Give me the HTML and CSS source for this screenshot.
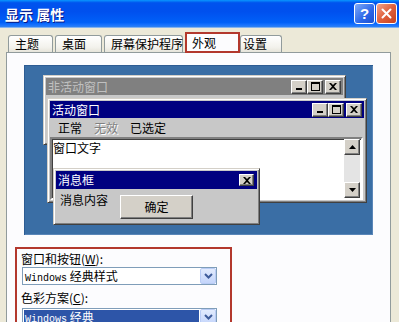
FILE: index.html
```html
<!DOCTYPE html>
<html>
<head>
<meta charset="utf-8">
<title>显示 属性</title>
<link rel="stylesheet" href="styles.css">
</head>
<body>
<div class="titlebar">
  <span class="title">显示 属性</span>
  <div class="caption-btns">
    <span class="cbtn help">?</span>
    <span class="cbtn close"><svg width="11" height="11" viewBox="0 0 11 11"><path d="M1.5 1.5L9.5 9.5M9.5 1.5L1.5 9.5" stroke="#fff" stroke-width="2" stroke-linecap="round"/></svg></span>
  </div>
</div>

<div class="tabs">
  <div class="tab t1">主题</div>
  <div class="tab t2">桌面</div>
  <div class="tab t3">屏幕保护程序</div>
  <div class="tab selected">外观</div>
  <div class="tab t5">设置</div>
</div>

<div class="panel">
  <div class="preview">
    <div class="win inactive">
      <div class="caption">
        <span class="cap-text">非活动窗口</span>
        <div class="cap-btns">
          <span class="cap-btn"><svg width="8" height="7" viewBox="0 0 8 7"><rect x="1" y="5" width="6" height="2" fill="#000"/></svg></span>
          <span class="cap-btn"><svg width="9" height="9" viewBox="0 0 9 9"><path d="M0 0H9V9H0Z M1 2H8V8H1Z" fill="#000" fill-rule="evenodd"/></svg></span>
          <span class="cap-btn gap"><svg width="8" height="7" viewBox="0 0 8 7"><path d="M0 0H2L4 2L6 0H8L5 3.5L8 7H6L4 5L2 7H0L3 3.5Z" fill="#000"/></svg></span>
        </div>
      </div>
    </div>

    <div class="win active">
      <div class="caption">
        <span class="cap-text">活动窗口</span>
        <div class="cap-btns">
          <span class="cap-btn"><svg width="8" height="7" viewBox="0 0 8 7"><rect x="1" y="5" width="6" height="2" fill="#000"/></svg></span>
          <span class="cap-btn"><svg width="9" height="9" viewBox="0 0 9 9"><path d="M0 0H9V9H0Z M1 2H8V8H1Z" fill="#000" fill-rule="evenodd"/></svg></span>
          <span class="cap-btn gap"><svg width="8" height="7" viewBox="0 0 8 7"><path d="M0 0H2L4 2L6 0H8L5 3.5L8 7H6L4 5L2 7H0L3 3.5Z" fill="#000"/></svg></span>
        </div>
      </div>
      <div class="menubar">
        <span class="menu-item">正常</span>
        <span class="menu-item disabled">无效</span>
        <span class="menu-item">已选定</span>
      </div>
      <div class="textarea">
        <span class="wintext">窗口文字</span>
        <div class="scrollbar">
          <span class="sb-btn"><svg width="7" height="4" viewBox="0 0 7 4"><path d="M3.5 0L7 4H0Z" fill="#000"/></svg></span>
          <span class="sb-track"></span>
          <span class="sb-btn"><svg width="7" height="4" viewBox="0 0 7 4"><path d="M0 0H7L3.5 4Z" fill="#000"/></svg></span>
        </div>
      </div>
    </div>

    <div class="win msgbox">
      <div class="caption small">
        <span class="cap-text">消息框</span>
        <span class="cap-btn mclose"><svg width="8" height="7" viewBox="0 0 8 7"><path d="M0 0H2L4 2L6 0H8L5 3.5L8 7H6L4 5L2 7H0L3 3.5Z" fill="#000"/></svg></span>
      </div>
      <div class="msg-body">
        <span class="msg-text">消息内容</span>
        <span class="ok-btn">确定</span>
      </div>
    </div>
  </div>

  <div class="group">
    <div class="label">窗口和按钮(<u>W</u>):</div>
    <div class="combo">
      <span class="combo-text"><span class="lat">Windows</span> 经典样式</span>
      <span class="combo-btn"><svg width="9" height="6" viewBox="0 0 9 6"><path d="M1 1L4.5 4.5L8 1" stroke="#3E5C9A" stroke-width="2" fill="none"/></svg></span>
    </div>
    <div class="label second">色彩方案(<u>C</u>):</div>
    <div class="combo">
      <span class="combo-text highlight"><span class="lat">Windows</span> 经典</span>
      <span class="combo-btn"><svg width="9" height="6" viewBox="0 0 9 6"><path d="M1 1L4.5 4.5L8 1" stroke="#3E5C9A" stroke-width="2" fill="none"/></svg></span>
    </div>
  </div>
</div>
</body>
</html>
```

FILE: styles.css
```css
html, body {
  margin: 0;
  padding: 0;
}
body {
  width: 399px;
  height: 322px;
  overflow: hidden;
  background: #ECE9D8;
  font-family: "Noto Sans CJK SC", "Liberation Sans", sans-serif;
  font-size: 12px;
  color: #000;
}

/* Title bar */
.titlebar {
  height: 28px;
  display: flex;
  align-items: center;
  padding: 0 2px 0 5px;
  background: linear-gradient(to bottom, #0997FF 0%, #0053EE 10%, #0050EE 40%, #0060F8 80%, #1A74FF 90%, #2E82F0 96%, #C9D9F0 100%);
}
.title {
  flex: 1;
  color: #fff;
  font-weight: bold;
  font-size: 14px;
  line-height: 16px;
  text-shadow: 1px 1px #0A1883;
}
.caption-btns {
  display: flex;
  gap: 1px;
  align-self: flex-start;
  margin-top: 3px;
}
.cbtn {
  width: 21px;
  height: 21px;
  box-sizing: border-box;
  border: 1px solid #fff;
  border-radius: 3px;
  display: flex;
  align-items: center;
  justify-content: center;
}
.help {
  background: linear-gradient(to bottom right, #7FAAF8, #2A66E8 60%, #1C50D0);
  color: #fff;
  font-family: "Liberation Sans", sans-serif;
  font-weight: bold;
  font-size: 15px;
  line-height: 19px;
}
.close {
  background: linear-gradient(to bottom right, #F3A58C, #E0603C 50%, #C8421E);
}

/* Tabs */
.tabs {
  display: flex;
  align-items: flex-end;
  gap: 2px;
  height: 21px;
  margin-top: 4px;
  margin-bottom: -1px;
  padding-left: 8px;
  position: relative;
  z-index: 1;
}
.tab {
  box-sizing: border-box;
  height: 17px;
  margin-bottom: 1px;
  border: 1px solid #919B9C;
  border-bottom: none;
  border-radius: 3px 3px 0 0;
  background: linear-gradient(to bottom, #FFFFFF, #F3F2EC 70%, #E6E4DA);
  padding-left: 6px;
  line-height: 15px;
  white-space: nowrap;
}
.t1 { width: 45px; }
.t2 { width: 47px; }
.t3 { width: 79px; }
.t5 { width: 42px; padding-left: 2px; }
.tab.selected {
  width: 55px;
  height: 21px;
  margin-bottom: 0;
  margin-right: -2px;
  border: 2px solid #B3382D;
  border-radius: 0;
  background: #FCFCFE;
  padding-left: 5px;
  line-height: 18px;
}

/* Panel */
.panel {
  margin: 0 8px 0 6px;
  height: 270px;
  overflow: hidden;
  border: 1px solid #919B9C;
  border-bottom: none;
  background: #FCFCFE;
  padding-top: 12px;
  box-sizing: border-box;
}

.preview {
  position: relative;
  margin-left: 17px;
  width: 349px;
  height: 170px;
  background: #3A6EA5;
  box-shadow: inset 1px 1px #2D5C93, inset -1px -1px #5A86B8;
}

/* Classic windows */
.win {
  position: absolute;
  box-sizing: border-box;
  background: #C8C8C8;
  border: 1px solid;
  border-color: #D4D0C8 #404040 #404040 #D4D0C8;
  box-shadow: inset 1px 1px #FFFFFF, inset -1px -1px #808080;
  padding: 2px;
  display: flex;
  flex-direction: column;
}
.inactive { left: 19px; top: 10px; width: 303px; height: 70px; }
.active { left: 23px; top: 33px; width: 320px; height: 105px; }
.msgbox { left: 29px; top: 103px; width: 207px; height: 57px; }

.caption {
  height: 17px;
  display: flex;
  align-items: center;
  padding-left: 2px;
  background: #000080;
  color: #fff;
}
.inactive .caption {
  background: #808080;
  color: #C0C0C0;
}
.caption.small { height: 18px; }
.cap-text {
  flex: 1;
  line-height: 14px;
}
.cap-btns {
  display: flex;
  margin-right: 2px;
}
.cap-btn {
  width: 16px;
  height: 14px;
  box-sizing: border-box;
  background: #D4D0C8;
  border: 1px solid;
  border-color: #FFFFFF #404040 #404040 #FFFFFF;
  box-shadow: inset -1px -1px #808080;
  display: flex;
  align-items: center;
  justify-content: center;
}
.cap-btn.gap { margin-left: 2px; }
.cap-btn.mclose {
  width: 15px;
  height: 12px;
  margin-right: 3px;
}

.menubar {
  height: 19px;
  display: flex;
  align-items: center;
  padding-left: 2px;
}
.menu-item {
  padding: 0 6px;
  line-height: 14px;
}
.menu-item.disabled {
  color: #808080;
  text-shadow: 1px 1px #FFFFFF;
}

.textarea {
  height: 63px;
  box-sizing: border-box;
  margin-right: 1px;
  background: #FFFFFF;
  border: 2px solid;
  border-color: #808080 #FFFFFF #FFFFFF #808080;
  box-shadow: inset 1px 1px #404040;
  display: flex;
}
.wintext {
  flex: 1;
  padding: 2px 0 0 1px;
  line-height: 14px;
}
.scrollbar {
  width: 16px;
  display: flex;
  flex-direction: column;
  background: #E4E4E4;
  margin-right: 1px;
}
.sb-btn {
  height: 16px;
  box-sizing: border-box;
  background: #D4D0C8;
  border: 1px solid;
  border-color: #FFFFFF #404040 #404040 #FFFFFF;
  box-shadow: inset -1px -1px #808080;
  display: flex;
  align-items: center;
  justify-content: center;
}
.sb-track { flex: 1; }

.msg-body {
  flex: 1;
  display: flex;
  align-items: flex-start;
  padding: 4px 0 0 4px;
}
.msg-text { line-height: 14px; }
.ok-btn {
  width: 73px;
  height: 24px;
  margin: 2px 0 0 12px;
  box-sizing: border-box;
  background: #D4D0C8;
  border: 1px solid;
  border-color: #FFFFFF #404040 #404040 #FFFFFF;
  box-shadow: inset -1px -1px #808080;
  display: flex;
  align-items: center;
  justify-content: center;
  line-height: 14px;
}

/* Group */
.group {
  margin: 12px 0 0 8px;
  width: 217px;
  height: 100px;
  box-sizing: border-box;
  border: 2px solid #B3382D;
  padding: 3px 4px 0 4px;
}
.label {
  line-height: 14px;
  color: #000;
}
.label.second { margin-top: 6px; }
.combo {
  margin: 1px 0 0 1px;
  width: 195px;
  height: 18px;
  box-sizing: border-box;
  border: 1px solid #7F9DB9;
  background: #FFFFFF;
  display: flex;
}
.label.second + .combo { margin-top: 3px; }
.combo-text {
  flex: 1;
  padding-left: 2px;
  line-height: 16px;
  white-space: nowrap;
}
.combo-text.highlight {
  margin: 1px;
  padding-left: 1px;
  line-height: 14px;
  background: #2D55A8;
  color: #FFFFFF;
}
.lat {
  font-family: "Liberation Mono", monospace;
  font-size: 10px;
}
.combo-btn {
  width: 16px;
  box-sizing: border-box;
  border: 1px solid #B9CCF5;
  border-radius: 2px;
  background: linear-gradient(to bottom, #E2EBFD, #C4D5FB);
  display: flex;
  align-items: center;
  justify-content: center;
}
```
